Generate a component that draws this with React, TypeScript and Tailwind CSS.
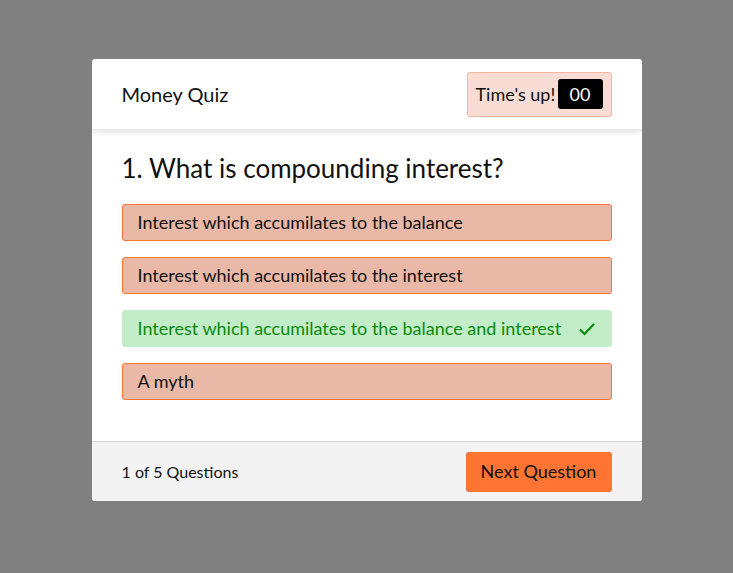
import React from "react";

const options = [
  { text: "Interest which accumilates to the balance", correct: false },
  { text: "Interest which accumilates to the interest", correct: false },
  { text: "Interest which accumilates to the balance and interest", correct: true },
  { text: "A myth", correct: false },
];

export default function App() {
  return (
    <div
      className="min-h-screen w-full bg-[#808080] flex justify-center pt-[59px]"
      style={{ fontFamily: "Lato, 'Open Sans', sans-serif" }}
    >
      <div className="w-[550px] h-[442px] bg-white rounded-[3px] flex flex-col overflow-hidden">
        <div className="relative z-10 h-[70px] flex items-center justify-between px-[30px] pr-[30px] shadow-[0_3px_6px_rgba(0,0,0,0.12)]">
          <div className="text-[20px] text-[#111]">Money Quiz</div>
          <div className="h-[45px] w-[145px] flex items-center justify-between pl-[8px] pr-[8px] bg-[#f9dcd3] border border-[#f4b6a3] rounded-[3px]">
            <span className="text-[18px] text-[#111]">Time's up!</span>
            <span className="h-[30px] w-[45px] bg-black text-white rounded-[3px] flex items-center justify-center text-[18px]">
              00
            </span>
          </div>
        </div>
        <div className="flex-1 px-[30px] pt-[24px]">
          <div className="text-[26px] text-[#111] leading-[30px] mb-[21px]">1. What is compounding interest?</div>
          <div className="flex flex-col gap-[16px]">
            {options.map((o) =>
              o.correct ? (
                <div
                  key={o.text}
                  className="h-[37px] flex items-center justify-between px-[15px] bg-[#c3ecc9] border border-[#c3ecc9] rounded-[3px] text-[#0c8a0c] text-[18px]"
                >
                  <span>{o.text}</span>
                  <svg width="18" height="14" viewBox="0 0 18 14" fill="none">
                    <path d="M2 7.5 L6.5 12 L16 2" stroke="#0c8a0c" strokeWidth="2.2" />
                  </svg>
                </div>
              ) : (
                <div
                  key={o.text}
                  className="h-[37px] flex items-center px-[15px] bg-[#e9b8a6] border border-[#ff7433] rounded-[3px] text-[#111] text-[18px]"
                >
                  {o.text}
                </div>
              )
            )}
          </div>
        </div>
        <div className="h-[60px] bg-[#f3f3f3] border-t border-[#d6d6d6] flex items-center justify-between px-[30px]">
          <span className="text-[16px] text-[#111]">1 of 5 Questions</span>
          <button className="h-[40px] w-[146px] bg-[#ff7433] rounded-[3px] text-[18px] text-[#111]">
            Next Question
          </button>
        </div>
      </div>
    </div>
  );
}
